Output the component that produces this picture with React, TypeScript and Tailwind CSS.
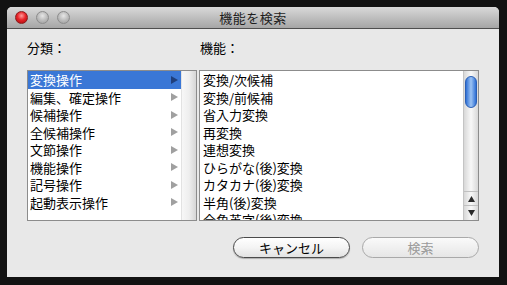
import React from 'react';

const categories = [
  '変換操作',
  '編集、確定操作',
  '候補操作',
  '全候補操作',
  '文節操作',
  '機能操作',
  '記号操作',
  '起動表示操作',
];

const functions = [
  '変換/次候補',
  '変換/前候補',
  '省入力変換',
  '再変換',
  '連想変換',
  'ひらがな(後)変換',
  'カタカナ(後)変換',
  '半角(後)変換',
  '全角英字(後)変換',
];

const font = "font-['Noto_Sans_CJK_JP','Noto_Sans',sans-serif]";

function Light({ red }: { red?: boolean }) {
  return (
    <div
      className={
        red
          ? 'w-[13px] h-[13px] rounded-full border border-[#8a1d1d] bg-[radial-gradient(circle_at_50%_35%,#ff9c9c_0%,#e8262a_45%,#a8070b_100%)]'
          : 'w-[13px] h-[13px] rounded-full border border-[#8c8c8c] bg-[radial-gradient(circle_at_50%_35%,#e6e6e6_0%,#bdbdbd_50%,#9a9a9a_100%)]'
      }
    />
  );
}

function Arrow({ active }: { active?: boolean }) {
  return (
    <svg width="7" height="8" viewBox="0 0 7 8" className="shrink-0">
      <path d="M0 0 L7 4 L0 8 Z" fill={active ? '#1f3f7c' : '#a0a0a0'} />
    </svg>
  );
}

export default function App() {
  return (
    <div className={`w-[507px] h-[285px] bg-[#121212] pt-[7px] pl-[7px] ${font}`}>
      <div className="w-[492px] h-[270px] bg-[#e8e8e8] rounded-t-[5px] overflow-hidden flex flex-col">
        {/* title bar */}
        <div className="h-[22px] shrink-0 relative flex items-center justify-center bg-gradient-to-b from-[#d9d9d9] to-[#a6a6a6] border-b border-[#4f4f4f]">
          <div className="absolute left-[8px] top-[4px] flex gap-[8px]">
            <Light red />
            <Light />
            <Light />
          </div>
          <span className="text-[13px] leading-[16px] text-[#1e1e1e] tracking-[0.5px]">機能を検索</span>
        </div>

        {/* body */}
        <div className="flex-1 pl-[20px] pr-[20px] pt-[11px] flex flex-col text-[13px] text-black">
          <div className="flex h-[16px] leading-[16px]">
            <span className="w-[173px]">分類：</span>
            <span>機能：</span>
          </div>

          <div className="flex gap-[2px] mt-[14px]">
            {/* category list */}
            <div className="w-[170px] h-[151px] border border-[#8c8c8c] bg-white flex">
              <div className="w-[153px] flex flex-col">
                {categories.map((c, i) => (
                  <div
                    key={c}
                    className={`h-[17.5px] leading-[17.5px] pl-[2px] pr-[3px] flex items-center justify-between ${
                      i === 0 ? 'bg-[#3a77d6] text-white' : ''
                    }`}
                  >
                    <span>{c}</span>
                    <Arrow active={i === 0} />
                  </div>
                ))}
              </div>
              <div className="flex-1 bg-gradient-to-r from-[#f7f7f7] via-[#eeeeee] to-[#d6d6d6] border-l border-[#e2e2e2]" />
            </div>

            {/* function list */}
            <div className="w-[280px] h-[151px] border border-[#8c8c8c] bg-white flex overflow-hidden">
              <div className="flex-1 flex flex-col pl-[3px] overflow-hidden">
                {functions.map((f) => (
                  <div key={f} className="h-[17.5px] leading-[17.5px] shrink-0 whitespace-nowrap">
                    {f}
                  </div>
                ))}
              </div>
              <div className="w-[15px] h-full flex flex-col border-l border-[#c4c4c4] bg-gradient-to-r from-[#d8d8d8] via-[#f8f8f8] to-[#d8d8d8]">
                <div className="flex-1 relative">
                  <div className="absolute left-[1px] top-[5px] w-[12px] h-[32px] rounded-full border border-[#2a5fb5] bg-gradient-to-r from-[#2e6fd4] via-[#9cc3f3] to-[#2e6fd4]" />
                </div>
                <div className="h-[14px] flex items-center justify-center border-t border-[#c0c0c0]">
                  <svg width="7" height="6" viewBox="0 0 7 6">
                    <path d="M3.5 0 L7 6 L0 6 Z" fill="#2a2a2a" />
                  </svg>
                </div>
                <div className="h-[15px] flex items-center justify-center border-t border-[#c0c0c0]">
                  <svg width="7" height="6" viewBox="0 0 7 6">
                    <path d="M0 0 L7 0 L3.5 6 Z" fill="#2a2a2a" />
                  </svg>
                </div>
              </div>
            </div>
          </div>

          {/* buttons */}
          <div className="flex justify-end gap-[12px] mt-[16px] pr-[0px]">
            <button className="w-[117px] h-[21px] rounded-full border border-[#4a4a4a] bg-gradient-to-b from-white via-[#f4f4f4] to-[#e2e2e2] text-[13px] leading-[19px] text-black shadow-[0_1px_1px_rgba(0,0,0,0.25)]">
              キャンセル
            </button>
            <button className="w-[117px] h-[21px] rounded-full border border-[#a9a9a9] bg-gradient-to-b from-[#fafafa] to-[#e6e6e6] text-[13px] leading-[19px] text-[#9a9a9a]">
              検索
            </button>
          </div>
        </div>
      </div>
    </div>
  );
}
